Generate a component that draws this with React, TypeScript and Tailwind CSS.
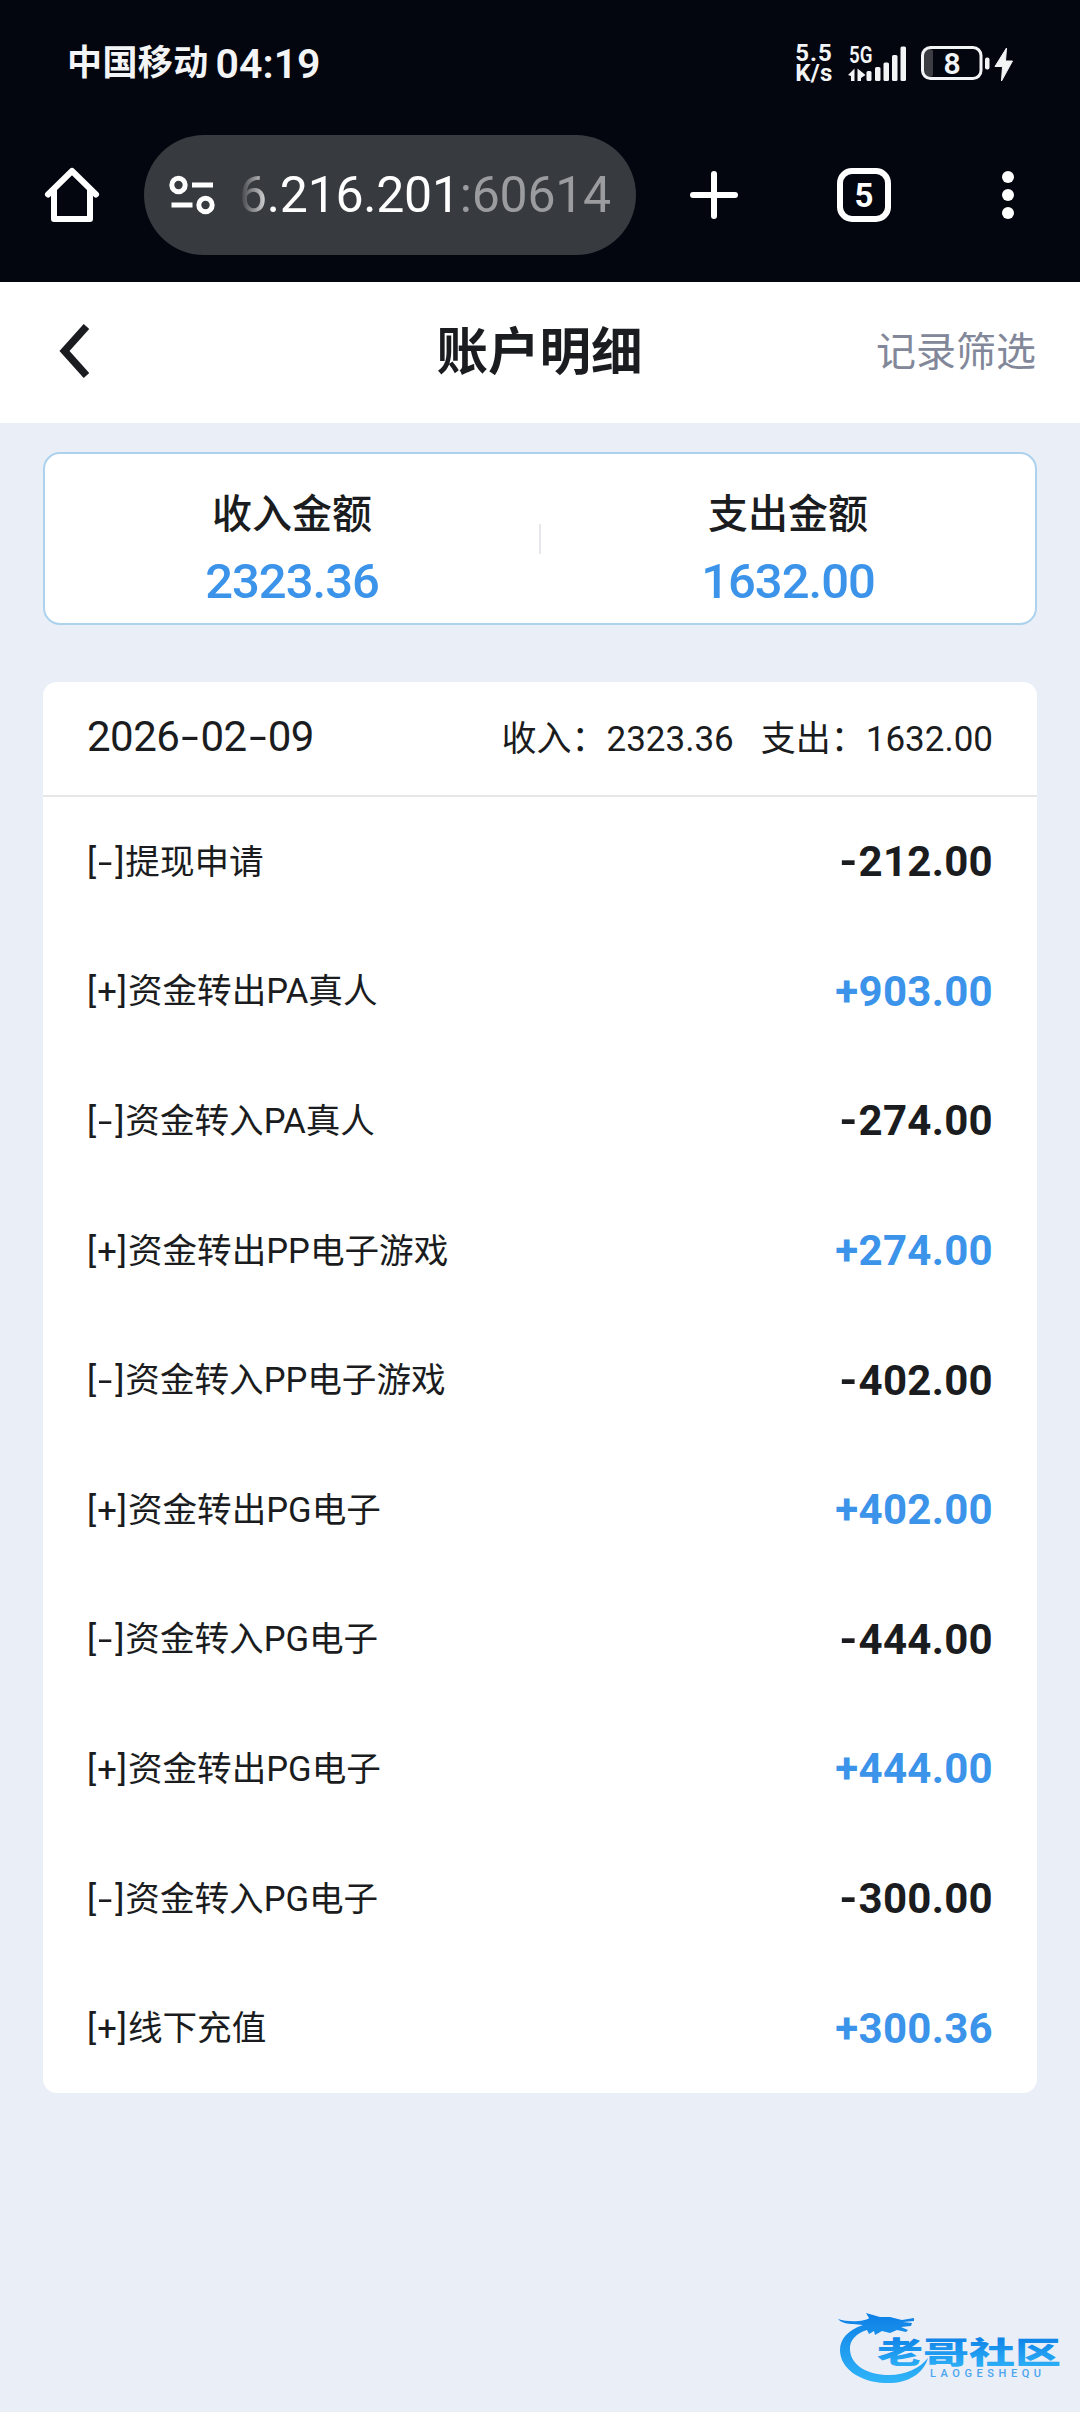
import React from 'react';

interface LedgerRow {
  sign: '+' | '-';
  label: string;
  amount: string;
}

const rows: LedgerRow[] = [
  { sign: '-', label: '提现申请', amount: '212.00' },
  { sign: '+', label: '资金转出PA真人', amount: '903.00' },
  { sign: '-', label: '资金转入PA真人', amount: '274.00' },
  { sign: '+', label: '资金转出PP电子游戏', amount: '274.00' },
  { sign: '-', label: '资金转入PP电子游戏', amount: '402.00' },
  { sign: '+', label: '资金转出PG电子', amount: '402.00' },
  { sign: '-', label: '资金转入PG电子', amount: '444.00' },
  { sign: '+', label: '资金转出PG电子', amount: '444.00' },
  { sign: '-', label: '资金转入PG电子', amount: '300.00' },
  { sign: '+', label: '线下充值', amount: '300.36' },
];

const totals = [
  { label: '收入金额', value: '2323.36' },
  { label: '支出金额', value: '1632.00' },
];

// Roboto's hyphen is short, so callers widen it to the width of a digit's dash.
const Dash: React.FC<{ className: string }> = ({ className }) => (
  <span className={`inline-block text-center ${className}`}>-</span>
);

const SignalIcon = () => (
  <svg className="overflow-visible" width="60" height="38" viewBox="0 0 60 38" fill="#f3f4f6">
    <text x="1" y="19" fontSize="24" fontWeight="600" textLength="23.500" lengthAdjust="spacingAndGlyphs">
      5G
    </text>
    <path d="M0 31 6.500 24.500V37H3v-5zM9.500 24.500 17.500 31l-4.500 3V37H9.500z" />
    <rect x="18.500" y="27" width="5" height="10" rx="1.500" />
    <rect x="27" y="23" width="5.500" height="14" rx="1.500" />
    <rect x="35.500" y="18.500" width="5.500" height="18.500" rx="1.500" />
    <rect x="44" y="11" width="5.500" height="26" rx="1.500" />
    <rect x="52.500" y="2.500" width="5.500" height="34.500" rx="1.500" />
  </svg>
);

const BatteryIcon = () => (
  <svg width="94" height="38" viewBox="0 0 94 38" fill="#f3f4f6">
    <rect x="4" y="5" width="9" height="28" rx="3" fill="#3b3d42" />
    <rect x="2.500" y="3.500" width="58.500" height="31" rx="8" fill="none" stroke="#f3f4f6" strokeWidth="3" />
    <text x="32" y="29.500" fontSize="30" fontWeight="600" textAnchor="middle">
      8
    </text>
    <rect x="65" y="13.500" width="4.500" height="12" rx="2" />
    <path d="M86.500 4 75 22.500h7.500L81.500 37 92.500 17H85.500z" strokeWidth="1" stroke="#f3f4f6" strokeLinejoin="round" />
  </svg>
);

const StatusBar = () => (
  <div className="flex h-[126px] items-center justify-between pr-[66px] pl-[67px] text-[#f3f4f6]">
    <div className="flex items-center pt-[3px]">
      <span className="text-[35px] font-bold tracking-[0.4px]">中国移动</span>
      <span className="ml-[7px] text-[41px] font-semibold">04:19</span>
    </div>
    <div className="flex items-center">
      <div className="mr-[13px] flex w-[42px] flex-col items-center text-[24px] leading-[20px] font-bold">
        <span className="tracking-[1px]">5.5</span>
        <span className="tracking-[0.3px]">K/s</span>
      </div>
      <SignalIcon />
      <div className="w-[12px]" />
      <BatteryIcon />
    </div>
  </div>
);

const BrowserBar = () => (
  <div className="flex h-[156px] items-start pt-[9px] text-white">
    <div className="flex h-[120px] w-[144px] items-center justify-center">
      <svg width="58" height="58" viewBox="0 0 58 58" fill="none" stroke="white" strokeWidth="6" strokeLinecap="round" strokeLinejoin="round">
        <path d="M5 28.500 29 5l24 23.500" />
        <path d="M11 25v28h36V25" />
      </svg>
    </div>
    <div className="flex h-[120px] w-[492px] items-center rounded-full bg-[#373a3f] pl-[25px]">
      <svg width="48" height="42" viewBox="0 0 48 42" fill="none" stroke="white" strokeWidth="5">
        <circle cx="9.500" cy="11" r="6.700" />
        <path d="M23 11h21M2.500 31h21" />
        <circle cx="36.500" cy="31" r="6.700" />
      </svg>
      <div className="ml-[22px] w-[376px] text-[50px] leading-[60px] tracking-[-0.25px] whitespace-nowrap [mask-image:linear-gradient(to_right,transparent,black_34px)]">
        6.216.201<span className="text-[#9a9c9f]">:60614</span>
      </div>
    </div>
    <div className="ml-[51px] flex h-[120px] items-center">
      <svg width="54" height="54" viewBox="0 0 54 54" stroke="white" strokeWidth="6" strokeLinecap="round">
        <path d="M27 6v42M6 27h42" />
      </svg>
      <div className="ml-[96px] flex size-[54px] items-center justify-center rounded-[15px] border-[6px] border-white text-[33px] leading-none font-bold">
        5
      </div>
      <div className="ml-[111px] flex flex-col gap-[6px]">
        <span className="size-[12px] rounded-full bg-white" />
        <span className="size-[12px] rounded-full bg-white" />
        <span className="size-[12px] rounded-full bg-white" />
      </div>
    </div>
  </div>
);

const PageHeader = () => (
  <header className="grid h-[141px] grid-cols-3 items-center bg-white pr-[44px] pl-[43px]">
    <svg className="mb-[4px] ml-[12px]" width="34" height="58" viewBox="0 0 34 58" fill="none" stroke="#1a1c20" strokeWidth="7.500">
      <path d="M31.500 4.500 9.500 29l22 24.500" />
    </svg>
    <h1 className="text-center text-[51.500px] leading-none font-bold whitespace-nowrap">账户明细</h1>
    <button className="text-right text-[40px] leading-none text-[#82889a]">记录筛选</button>
  </header>
);

const Watermark = () => (
  <svg className="absolute right-[12px] bottom-[22px]" width="232" height="84" viewBox="0 0 232 84">
    <defs>
      <linearGradient id="wave" x1="0" y1="0" x2="0" y2="1">
        <stop offset="0" stopColor="#0d7fe6" />
        <stop offset="1" stopColor="#2fb4f8" />
      </linearGradient>
    </defs>
    <path
      fill="url(#wave)"
      d="M27 19C12 24 4 33 4 44c0 18 19 32 45 33 21 1 38-8 43-25-8 10-22 17-39 17-22 0-38-10-39-25-1-10 7-17 17-20l2 4 5-3 1 4 7-4 8 2 7-3 9 2 2-2-7-3 10-1 1-3-9-1 11-1 0-3-12 2-12-3-10 0-14-4 3 5C31 15 13 17 2 13c3 4 10 5 15 5z"
    />
    <text x="41" y="57" fontSize="30" fontWeight="900" fill="url(#wave)" textLength="184" lengthAdjust="spacingAndGlyphs">
      老哥社区
    </text>
    <text x="94" y="71" fontSize="11" fontWeight="500" fill="#4aa5ef" textLength="111" lengthAdjust="spacing">
      LAOGESHEQU
    </text>
  </svg>
);

const App: React.FC = () => (
  <div className="relative h-[2412px] w-[1080px] overflow-hidden bg-[#eaeef7] font-[Roboto,'Noto_Sans_CJK_SC',sans-serif] text-[#1a1c20]">
    <div className="bg-[#03060f]">
      <StatusBar />
      <BrowserBar />
    </div>
    <PageHeader />

    <main className="px-[43px] pt-[29px]">
      <section className="flex h-[173px] items-center rounded-[17px] border-2 border-[#add2ee] bg-white">
        {totals.map((item, index) => (
          <React.Fragment key={item.label}>
            {index > 0 && <div className="h-[30px] w-[2px] bg-[#e5e7ea]" />}
            <div className="flex flex-1 flex-col items-center pt-[22px]">
              <span className="text-[40px] leading-[60px] font-medium">{item.label}</span>
              <span className="mt-[4px] text-[49px] leading-[66px] font-medium tracking-[-1px] text-[#3b93ea]">{item.value}</span>
            </div>
          </React.Fragment>
        ))}
      </section>

      <section className="mt-[57px] rounded-[14px] bg-white">
        <div className="flex h-[115px] items-center justify-between border-b-2 border-[#e5e6e8] px-[44px]">
          <span className="pb-[4px] text-[42px] tracking-[-0.5px]">
            2026
            <Dash className="w-[21px] scale-x-150" />
            02
            <Dash className="w-[21px] scale-x-150" />
            09
          </span>
          <div className="flex pt-[3px] text-[35px]">
            <span>收入：2323.36</span>
            <span className="ml-[27px]">支出：1632.00</span>
          </div>
        </div>
        {rows.map((row, index) => (
          <div key={index} className="flex h-[129.6px] items-center justify-between px-[44px]">
            <span className="pt-[2px] text-[34.600px]">
              <span className="tracking-[1px]">
                [{row.sign === '-' ? <Dash className="w-[18px] scale-x-150" /> : '+'}]
              </span>
              {row.label}
            </span>
            <span className={row.sign === '+' ? 'text-[42px] font-bold tracking-[0.3px] text-[#3b93ea]' : 'text-[42px] font-bold tracking-[0.3px]'}>
              {row.sign === '-' ? <Dash className="w-[21px] scale-x-110" /> : '+'}
              {row.amount}
            </span>
          </div>
        ))}
      </section>
    </main>

    <Watermark />
  </div>
);

export default App;
